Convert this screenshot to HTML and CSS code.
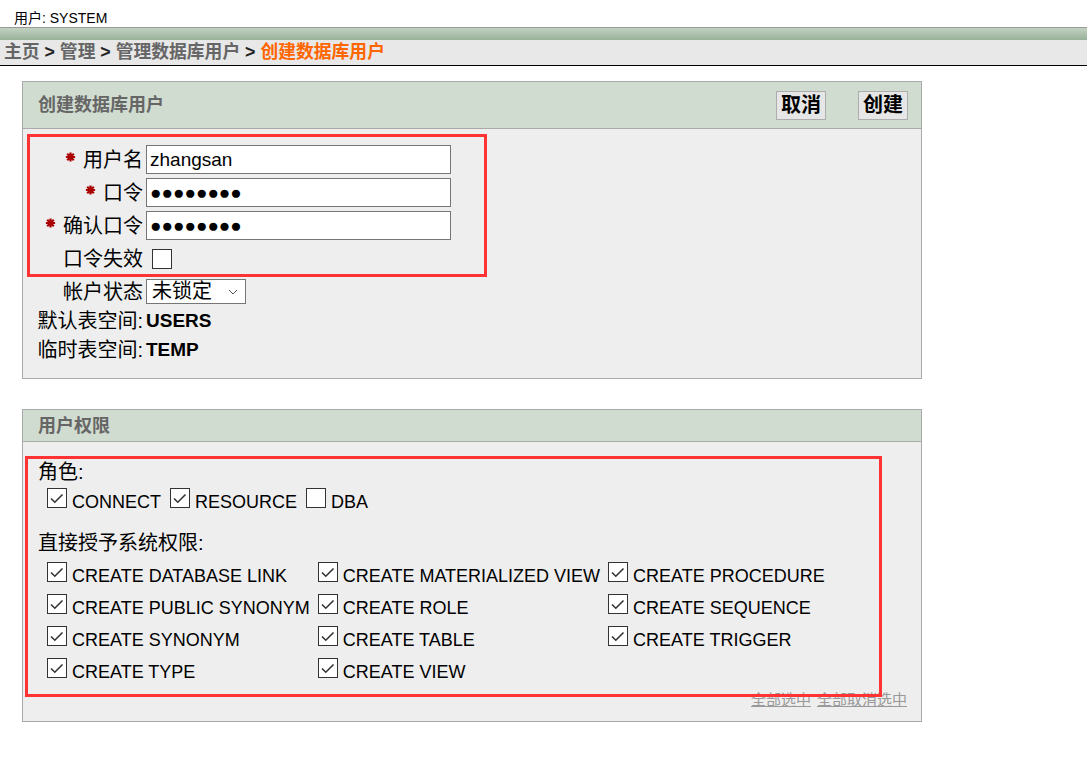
FILE: index.html
```html
<!DOCTYPE html>
<html lang="zh">
<head>
<meta charset="utf-8">
<title>创建数据库用户</title>
<link rel="stylesheet" href="styles.css">
</head>
<body>
<div class="userbar">用户: SYSTEM</div>
<div class="greenbar"></div>
<div class="crumbs"><a class="crumb">主页</a><span class="sep"> &gt; </span><a class="crumb">管理</a><span class="sep"> &gt; </span><a class="crumb">管理数据库用户</a><span class="sep"> &gt; </span><span class="current">创建数据库用户</span></div>

<main class="content">
  <section class="panel">
    <div class="phead tall">
      <h2 class="ptitle">创建数据库用户</h2>
      <div class="btns"><button class="btn">取消</button><button class="btn">创建</button></div>
    </div>
    <div class="pbody form">
      <div class="frow r33">
        <label class="flabel"><svg class="req" viewBox="0 0 10 9"><path d="M5 0.5V8.5M0.8 4.5H9.2M2 1.5L8 7.5M8 1.5L2 7.5"/></svg>用户名</label>
        <input class="txt fval" value="zhangsan">
      </div>
      <div class="frow r33">
        <label class="flabel"><svg class="req" viewBox="0 0 10 9"><path d="M5 0.5V8.5M0.8 4.5H9.2M2 1.5L8 7.5M8 1.5L2 7.5"/></svg>口令</label>
        <input class="txt fval" value="●●●●●●●●">
      </div>
      <div class="frow r33">
        <label class="flabel"><svg class="req" viewBox="0 0 10 9"><path d="M5 0.5V8.5M0.8 4.5H9.2M2 1.5L8 7.5M8 1.5L2 7.5"/></svg>确认口令</label>
        <input class="txt fval" value="●●●●●●●●">
      </div>
      <div class="frow r34">
        <label class="flabel">口令失效</label>
        <span class="cb solo"></span>
      </div>
      <div class="frow r31">
        <label class="flabel">帐户状态</label>
        <div class="sel fval"><span>未锁定</span><svg class="chev" viewBox="0 0 10 6"><path d="M1 1L5 5L9 1"/></svg></div>
      </div>
      <div class="frow r28">
        <span class="flabel">默认表空间:</span>
        <span class="val fval">USERS</span>
      </div>
      <div class="frow r29">
        <span class="flabel">临时表空间:</span>
        <span class="val fval">TEMP</span>
      </div>
    </div>
    <div class="mark mark1"></div>
  </section>

  <section class="panel">
    <div class="phead short">
      <h2 class="ptitle">用户权限</h2>
    </div>
    <div class="pbody perms">
      <div class="seclabel">角色:</div>
      <div class="roles">
        <label class="ck"><span class="cb"><svg viewBox="0 0 18 18"><path d="M3 9.5L6.8 13.2L14.5 5.5"/></svg></span>CONNECT</label>
        <label class="ck"><span class="cb"><svg viewBox="0 0 18 18"><path d="M3 9.5L6.8 13.2L14.5 5.5"/></svg></span>RESOURCE</label>
        <label class="ck"><span class="cb"></span>DBA</label>
      </div>
      <div class="seclabel sys">直接授予系统权限:</div>
      <div class="privgrid">
        <label class="ck"><span class="cb"><svg viewBox="0 0 18 18"><path d="M3 9.5L6.8 13.2L14.5 5.5"/></svg></span>CREATE DATABASE LINK</label>
        <label class="ck"><span class="cb"><svg viewBox="0 0 18 18"><path d="M3 9.5L6.8 13.2L14.5 5.5"/></svg></span>CREATE MATERIALIZED VIEW</label>
        <label class="ck"><span class="cb"><svg viewBox="0 0 18 18"><path d="M3 9.5L6.8 13.2L14.5 5.5"/></svg></span>CREATE PROCEDURE</label>
        <label class="ck"><span class="cb"><svg viewBox="0 0 18 18"><path d="M3 9.5L6.8 13.2L14.5 5.5"/></svg></span>CREATE PUBLIC SYNONYM</label>
        <label class="ck"><span class="cb"><svg viewBox="0 0 18 18"><path d="M3 9.5L6.8 13.2L14.5 5.5"/></svg></span>CREATE ROLE</label>
        <label class="ck"><span class="cb"><svg viewBox="0 0 18 18"><path d="M3 9.5L6.8 13.2L14.5 5.5"/></svg></span>CREATE SEQUENCE</label>
        <label class="ck"><span class="cb"><svg viewBox="0 0 18 18"><path d="M3 9.5L6.8 13.2L14.5 5.5"/></svg></span>CREATE SYNONYM</label>
        <label class="ck"><span class="cb"><svg viewBox="0 0 18 18"><path d="M3 9.5L6.8 13.2L14.5 5.5"/></svg></span>CREATE TABLE</label>
        <label class="ck"><span class="cb"><svg viewBox="0 0 18 18"><path d="M3 9.5L6.8 13.2L14.5 5.5"/></svg></span>CREATE TRIGGER</label>
        <label class="ck"><span class="cb"><svg viewBox="0 0 18 18"><path d="M3 9.5L6.8 13.2L14.5 5.5"/></svg></span>CREATE TYPE</label>
        <label class="ck"><span class="cb"><svg viewBox="0 0 18 18"><path d="M3 9.5L6.8 13.2L14.5 5.5"/></svg></span>CREATE VIEW</label>
      </div>
      <div class="links"><a class="lnk">全部选中</a><a class="lnk">全部取消选中</a></div>
    </div>
    <div class="mark mark2"></div>
  </section>
</main>
</body>
</html>
```

FILE: styles.css
```css
* { box-sizing: border-box; }
html, body { margin: 0; padding: 0; background: #fff; }
body {
  font-family: "Liberation Sans", "Noto Sans CJK SC", sans-serif;
  color: #000;
  width: 1087px;
}

.userbar {
  height: 27px;
  padding: 8px 0 0 14px;
  font-size: 14px;
  line-height: 20px;
}
.greenbar {
  height: 13px;
  border-top: 1px solid #999;
  background: linear-gradient(#c2d2c2, #98b098);
}
.crumbs {
  height: 26px;
  background: #e7e8e7;
  border-bottom: 1px solid #000;
  padding-left: 4px;
  font-size: 17.8px;
  font-weight: bold;
  line-height: 25px;
  white-space: nowrap;
}
.crumb { color: #666; }
.sep { color: #222; }
.current { color: #ff6600; }

.content {
  margin: 15px 0 0 22px;
  width: 900px;
}
.panel {
  position: relative;
  border: 1px solid #aaa;
  background: #eee;
}
.panel + .panel { margin-top: 30px; }

.phead {
  display: flex;
  align-items: center;
  justify-content: space-between;
  background: #d0dcd0;
  border-bottom: 1px solid #aaa;
  padding: 0 13px 0 15px;
}
.phead.tall { height: 47px; }
.phead.short { height: 32px; }
.ptitle {
  margin: 0;
  font-size: 18px;
  font-weight: bold;
  color: #666;
  line-height: 24px;
}
.btns { display: flex; gap: 32px; }
.btn {
  height: 29px;
  padding: 0 4px;
  font-family: "Liberation Sans", "Noto Sans CJK SC", sans-serif;
  font-size: 20px;
  font-weight: bold;
  line-height: 26px;
  color: #000;
  background: #e6e6e6;
  border: 1px solid #adadad;
  border-radius: 0;
}

.pbody.form { padding: 14px 0 14px 15px; }
.frow { display: flex; align-items: center; }
.r33 { height: 33px; }
.r34 { height: 34px; }
.r31 { height: 31px; }
.r28 { height: 28px; }
.r29 { height: 29px; }
.flabel {
  width: 105px;
  flex: none;
  display: flex;
  justify-content: flex-end;
  align-items: center;
  font-size: 20px;
  line-height: 26px;
  white-space: nowrap;
}
.req {
  width: 11px;
  height: 10px;
  margin: 0 7px 5px 0;
  fill: none;
  stroke: #a00;
  stroke-width: 2;
}
.fval { margin-left: 3px; }
.txt {
  width: 305px;
  height: 29px;
  border: 1px solid #767676;
  border-radius: 0;
  padding: 0 3px;
  font-family: "Liberation Sans", "DejaVu Sans", sans-serif;
  font-size: 19px;
  color: #000;
  background: #fff;
  outline: none;
}
.sel {
  display: flex;
  align-items: center;
  justify-content: space-between;
  width: 100px;
  height: 25px;
  border: 1px solid #767676;
  background: #fff;
  padding: 0 7px 0 5px;
  font-size: 20px;
  line-height: 23px;
}
.chev {
  width: 10px;
  height: 6px;
  fill: none;
  stroke: #555;
  stroke-width: 1;
}
.val {
  font-size: 19px;
  font-weight: bold;
  line-height: 24px;
}

.cb {
  display: inline-block;
  width: 20px;
  height: 20px;
  border: 1px solid #333;
  background: #fff;
  overflow: hidden;
  vertical-align: baseline;
  margin-right: 5px;
}
.cb svg {
  display: block;
  width: 18px;
  height: 18px;
  fill: none;
  stroke: #333;
  stroke-width: 1.6;
}
.cb.solo { margin: 0 0 0 9px; }

.pbody.perms { padding: 16px 13px 9px 15px; }
.seclabel {
  font-size: 20px;
  line-height: 28px;
}
.seclabel.sys { margin-top: 10px; line-height: 30px; }
.roles {
  padding-left: 9px;
  font-size: 18px;
  line-height: 32px;
  white-space: nowrap;
}
.ck { margin-right: 4px; white-space: nowrap; }
.privgrid {
  display: grid;
  grid-template-columns: repeat(3, max-content);
  column-gap: 8px;
  margin-top: 2px;
  padding-left: 9px;
  font-size: 18px;
  line-height: 32px;
}
.privgrid .ck { margin-right: 0; }
.links {
  text-align: right;
  padding-right: 1px;
  font-size: 15px;
  line-height: 24px;
}
.lnk {
  color: #999;
  text-decoration: underline;
  margin-left: 6px;
}

.mark {
  position: absolute;
  border: 3px solid #f33;
  pointer-events: none;
}
.mark1 { left: 4px; top: 52px; width: 460px; height: 143px; }
.mark2 { left: 2px; top: 46px; width: 857px; height: 241px; }
```
